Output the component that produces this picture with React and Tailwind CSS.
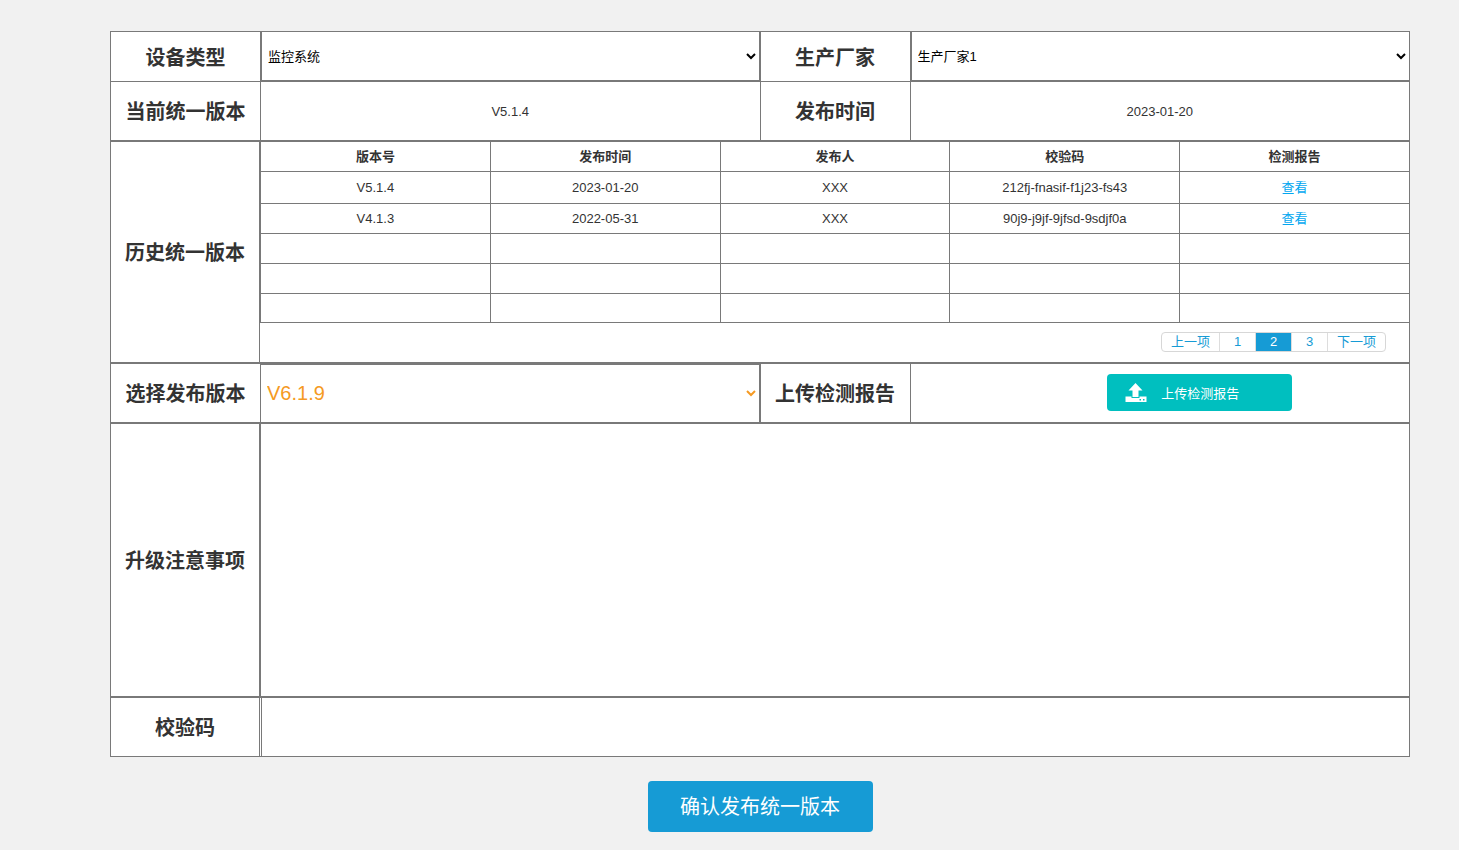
import { useState } from "react";

const history = [
  { version: "V5.1.4", date: "2023-01-20", user: "XXX", code: "212fj-fnasif-f1j23-fs43" },
  { version: "V4.1.3", date: "2022-05-31", user: "XXX", code: "90j9-j9jf-9jfsd-9sdjf0a" },
];

const rowHeights = ["h-8", "h-[30px]", "h-[30px]", "h-[30px]", "h-[29px]"];

function Label({ as: Tag = "div", className = "", children, ...rest }) {
  return (
    <Tag
      className={`flex shrink-0 items-center justify-center border-r border-[#797979] pt-0.5 text-[20px] leading-6 font-bold ${className}`}
      {...rest}
    >
      {children}
    </Tag>
  );
}

function UploadIcon() {
  return (
    <svg width="22" height="20" viewBox="0 0 22 20" fill="currentColor" aria-hidden="true">
      <path d="M10.5 0 L17.5 7.5 H13.5 V14 H7.5 V7.5 H3.5 Z" />
      <path
        fillRule="evenodd"
        d="M0.5 13.5 H6.5 V15 H14.5 V13.5 H21.5 V19 H0.5 Z M14.5 16 V17.5 H16 V16 Z M18 16 V17.5 H19.5 V16 Z"
      />
    </svg>
  );
}

function Pagination() {
  const [page, setPage] = useState(2);
  const base = "h-full border-r border-[#ddd] text-center";

  return (
    <nav className="flex h-5 overflow-hidden rounded border border-[#d7d7d7] text-[13px] leading-[18px] text-[#169bd5]">
      <button type="button" className={`${base} w-[58px]`} onClick={() => setPage(Math.max(1, page - 1))}>
        上一项
      </button>
      {[1, 2, 3].map((n) => (
        <button
          key={n}
          type="button"
          onClick={() => setPage(n)}
          className={`${base} w-9 ${n === page ? "bg-[#169bd5] text-white" : ""}`}
        >
          {n}
        </button>
      ))}
      <button type="button" className="w-[57px] text-center" onClick={() => setPage(Math.min(3, page + 1))}>
        下一项
      </button>
    </nav>
  );
}

export default function App() {
  return (
    <div className="min-h-screen bg-[#f1f1f1] pt-[31px] pr-[49px] pb-4 pl-[110px] font-['Liberation_Sans','Noto_Sans_CJK_SC',sans-serif] text-[13px] leading-4 text-[#333]">
      <form onSubmit={(e) => e.preventDefault()}>
        {/* Device and current version */}
        <section className="border border-[#797979] bg-white">
          <div className="flex h-[50px] border-b border-[#797979]">
            <Label as="label" htmlFor="device" className="w-[150px]">
              设备类型
            </Label>
            <div className="flex flex-1 border-r border-[#797979]">
              <select id="device" className="w-full border-x border-b border-[#797979] bg-white pl-0.5 text-black">
                <option>监控系统</option>
              </select>
            </div>
            <Label as="label" htmlFor="vendor" className="w-[150px]">
              生产厂家
            </Label>
            <div className="flex flex-1">
              <select id="vendor" className="w-full border-b border-l border-[#797979] bg-white pl-0.5 text-black">
                <option>生产厂家1</option>
              </select>
            </div>
          </div>
          <div className="flex h-[58px]">
            <Label className="w-[150px]">当前统一版本</Label>
            <div className="flex flex-1 items-center justify-center border-r border-[#797979] pt-px">V5.1.4</div>
            <Label className="w-[150px]">发布时间</Label>
            <div className="flex flex-1 items-center justify-center pt-px">2023-01-20</div>
          </div>
        </section>

        {/* Version history */}
        <section className="flex border border-[#797979] bg-white">
          <Label className="w-[149px]">历史统一版本</Label>
          <div className="flex-1">
            <table className="w-[calc(100%+1px)] table-fixed border-collapse text-center [&_td]:border-x [&_td]:border-b [&_td]:border-[#797979] [&_td]:pt-px [&_th]:border-x [&_th]:border-b [&_th]:border-[#797979] [&_th]:pt-px">
              <thead>
                <tr className="h-[29px]">
                  <th>版本号</th>
                  <th>发布时间</th>
                  <th>发布人</th>
                  <th>校验码</th>
                  <th>检测报告</th>
                </tr>
              </thead>
              <tbody>
                {rowHeights.map((height, i) => {
                  const row = history[i];
                  return (
                    <tr key={i} className={height}>
                      <td>{row?.version}</td>
                      <td>{row?.date}</td>
                      <td>{row?.user}</td>
                      <td>{row?.code}</td>
                      <td>
                        {row && (
                          <a href="#report" className="text-[#02a7f0]">
                            查看
                          </a>
                        )}
                      </td>
                    </tr>
                  );
                })}
              </tbody>
            </table>
            <div className="flex h-[39px] items-start justify-end pt-[9px] pr-[23px]">
              <Pagination />
            </div>
          </div>
        </section>

        {/* Release version and report upload */}
        <section className="flex h-[60px] border border-[#797979] bg-white">
          <Label as="label" htmlFor="release" className="w-[150px]">
            选择发布版本
          </Label>
          <div className="flex flex-1 border-r border-[#797979]">
            <select
              id="release"
              className="w-full border-t border-r border-[#797979] bg-white pl-0.5 text-[20px] text-[#f59a23]"
            >
              <option>V6.1.9</option>
            </select>
          </div>
          <Label className="w-[150px]">上传检测报告</Label>
          <div className="flex flex-1 items-center">
            <div className="flex w-full justify-center pl-20">
              <button
                type="button"
                className="flex h-[37px] w-[185px] items-center gap-3.5 rounded bg-[#00bfbf] pl-[18px] text-white"
              >
                <UploadIcon />
                <span className="pt-0.5">上传检测报告</span>
              </button>
            </div>
          </div>
        </section>

        {/* Upgrade notes */}
        <section className="flex h-[274px] border border-[#797979] bg-white">
          <Label as="label" htmlFor="notes" className="w-[149px]">
            升级注意事项
          </Label>
          <textarea id="notes" className="flex-1 resize-none border-l border-[#797979] p-2 outline-none" />
        </section>

        <section className="flex h-[60px] border border-[#797979] bg-white">
          <Label as="label" htmlFor="checksum" className="w-[149px]">
            校验码
          </Label>
          <input id="checksum" type="text" className="ml-px flex-1 border-l border-[#797979] px-2 outline-none" />
        </section>

        <div className="mt-6 flex justify-center">
          <button type="submit" className="h-[51px] w-[225px] rounded bg-[#169bd5] pt-0.5 text-[20px] leading-6 text-white">
            确认发布统一版本
          </button>
        </div>
      </form>
    </div>
  );
}
